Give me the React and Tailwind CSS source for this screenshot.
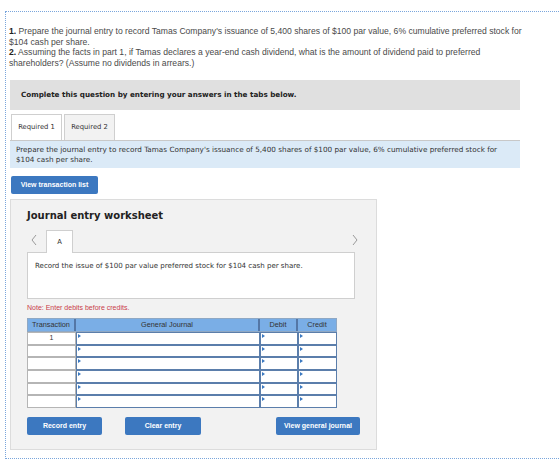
const arial = "font-['Liberation_Sans',Arial,sans-serif]";
const verdana = "font-['DejaVu_Sans',Verdana,sans-serif]";

function Chevron({ dir }) {
  return (
    <svg width="8" height="12" viewBox="0 0 8 12" className="block text-[#9a9a9a]">
      <polyline
        points={dir === "left" ? "6,1 2,6 6,11" : "2,1 6,6 2,11"}
        fill="none"
        stroke="currentColor"
        strokeWidth="1"
      />
    </svg>
  );
}

function InputCell({ w }) {
  return (
    <div className={`relative h-[12.7px] border border-[#5b7eab] bg-white ${w}`}>
      <span className="absolute left-[1px] top-[1px] h-0 w-0 border-t-[2px] border-b-[2px] border-l-[3px] border-t-transparent border-b-transparent border-l-[#3a78c0]" />
    </div>
  );
}

function JournalRow({ n }) {
  return (
    <div className="flex">
      <div className={`flex h-[12.7px] w-[49px] items-center justify-center border border-[#b5b5b5] bg-white text-[7px] text-[#333] ${arial}`}>
        {n}
      </div>
      <InputCell w="w-[184px]" />
      <InputCell w="w-[38px]" />
      <InputCell w="w-[39px]" />
    </div>
  );
}

function BlueButton({ children, w, className = "" }) {
  return (
    <button
      className={`block h-[18px] ${w} rounded-[2px] bg-[#3c78c0] text-[7px] font-bold text-white ${arial} ${className}`}
    >
      {children}
    </button>
  );
}

export default function App() {
  return (
    <div className="h-[459px] w-[560px] overflow-hidden bg-white">
      <div className="ml-[5px] mt-[11px] h-[448px] w-[560px] border-l border-t border-b border-dotted border-[#7aa6dc] pl-[3px] pt-[14px]">
        <div className={`text-[8.6px] leading-[10.5px] text-[#4a4a4a] ${arial}`}>
          <div className="whitespace-nowrap">
            <b className="font-bold text-[#222]">1.</b> Prepare the journal entry to record Tamas Company's issuance of
            5,400 shares of $100 par value, 6% cumulative preferred stock for
          </div>
          <div>$104 cash per share.</div>
          <div className="whitespace-nowrap">
            <b className="font-bold text-[#222]">2.</b> Assuming the facts in part 1, if Tamas declares a year-end cash
            dividend, what is the amount of dividend paid to preferred
          </div>
          <div>shareholders? (Assume no dividends in arrears.)</div>
        </div>

        <div className="ml-[1px] mt-[12px] w-[510px]">
          <div className={`flex h-[30px] items-center bg-[#e0e0e0] pl-[11px] text-[7.2px] font-bold text-[#222] ${verdana}`}>
            Complete this question by entering your answers in the tabs below.
          </div>

          <div className={`mt-[4px] flex gap-[2px] pl-[1px] text-[6.8px] text-[#333] ${verdana}`}>
            <div className="flex h-[26px] w-[51px] items-center justify-center border border-b-0 border-[#cfcfcf] bg-white">
              Required 1
            </div>
            <div className="flex h-[26px] w-[51px] items-center justify-center border border-b-0 border-[#cfcfcf] bg-[#f2f2f2]">
              Required 2
            </div>
          </div>

          <div className={`h-[28px] border-t border-[#c8c8c8] bg-[#dbeaf7] px-[6px] pt-[4px] text-[7.25px] leading-[10px] text-[#333] ${verdana}`}>
            <div className="whitespace-nowrap">
              Prepare the journal entry to record Tamas Company's issuance of 5,400 shares of $100 par value, 6% cumulative
              preferred stock for
            </div>
            <div>$104 cash per share.</div>
          </div>

          <div className="mt-[8px] flex pl-[1px]">
            <BlueButton w="w-[87px]">View transaction list</BlueButton>
          </div>

          <div className="mt-[5px] flex h-[251px] w-[367px] flex-col border border-[#dcdcdc] bg-[#f2f2f2] px-[16px] pt-[9px]">
            <div className={`text-[10px] font-bold leading-[14px] text-[#222] ${verdana}`}>Journal entry worksheet</div>

            <div className="mt-[7px] flex items-end justify-between">
              <div className="flex items-end">
                <div className="mb-[6px] ml-[3px] mr-[8px]">
                  <Chevron dir="left" />
                </div>
                <div className={`relative z-10 -mb-[1px] flex h-[23px] w-[27px] items-center justify-center border border-b-0 border-[#cfcfcf] bg-white text-[6.8px] text-[#333] ${verdana}`}>
                  A
                </div>
              </div>
              <div className="mb-[6px] mr-[1px]">
                <Chevron dir="right" />
              </div>
            </div>

            <div className={`h-[47px] w-[328px] border border-[#cfcfcf] bg-white px-[7px] pt-[8px] text-[7.05px] text-[#333] ${verdana}`}>
              Record the issue of $100 par value preferred stock for $104 cash per share.
            </div>

            <div className={`mt-[4px] text-[7px] leading-[10px] text-[#c9404a] ${arial}`}>Note: Enter debits before credits.</div>

            <div className={`mt-[5px] w-[310px] text-[7.3px] text-[#333] ${arial}`}>
              <div className="flex h-[14px] border border-[#8fa8c4] bg-[#7aaee6]">
                <div className="flex w-[48px] items-center justify-center border-r-2 border-[#5477a6]">Transaction</div>
                <div className="flex w-[184px] items-center justify-center border-r-2 border-[#5477a6]">General Journal</div>
                <div className="flex w-[38px] items-center justify-center border-r-2 border-[#5477a6]">Debit</div>
                <div className="flex flex-1 items-center justify-center">Credit</div>
              </div>
              {[1, "", "", "", "", ""].map((n, i) => (
                <JournalRow key={i} n={n} />
              ))}
            </div>

            <div className="mt-[9px] flex">
              <BlueButton w="w-[75px]">Record entry</BlueButton>
              <BlueButton w="w-[76px]" className="ml-[23px]">Clear entry</BlueButton>
              <BlueButton w="w-[84px]" className="ml-auto">View general journal</BlueButton>
            </div>
          </div>
        </div>
      </div>
    </div>
  );
}
